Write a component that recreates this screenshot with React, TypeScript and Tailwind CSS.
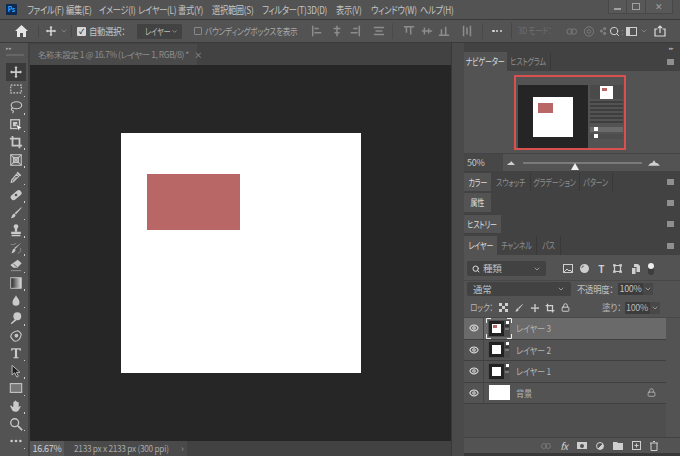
import { ChevronDown, Eye, Lock, Search } from "lucide-react";
import type { ReactNode } from "react";

const fontCls = "font-['Noto_Sans_CJK_JP',sans-serif] [font-feature-settings:'palt'] tracking-[-0.3px] whitespace-nowrap";

const menus = [
  ["ファイル(F)", "w-[39px]"],
  ["編集(E)", "w-[33px]"],
  ["イメージ(I)", "w-[39px]"],
  ["レイヤー(L)", "w-[40px]"],
  ["書式(Y)", "w-[34px]"],
  ["選択範囲(S)", "w-[50px]"],
  ["フィルター(T)", "w-[45px]"],
  ["3D(D)", "w-[29px]"],
  ["表示(V)", "w-[35px]"],
  ["ウィンドウ(W)", "w-[49px]"],
  ["ヘルプ(H)", "w-[34px]"],
];

// tool bar icons, drawn on a 16x16 box
const tools = [
  <path d="M8 1l2 2.500H9V7h3.500V6L15 8l-2.500 2V9H9v3.500h1L8 15l-2-2.500h1V9H3.500v1L1 8l2.500-2v1H7V3.500H6z" fill="currentColor" />,
  <rect x="2" y="3.500" width="12" height="9" fill="none" stroke="currentColor" strokeWidth="1.300" strokeDasharray="2 1.500" />,
  <g fill="none" stroke="currentColor" strokeWidth="1.300"><ellipse cx="8.500" cy="6" rx="6" ry="4" /><path d="M4 9c-2 1-1.500 3 0 3s1 2 0 3" /></g>,
  <g><rect x="2" y="2" width="10" height="10" fill="none" stroke="currentColor" strokeWidth="1.500" /><rect x="4.500" y="4.500" width="5" height="5" fill="currentColor" /><path d="M8 7l7 4-3 1-1 3z" fill="#fff" stroke="#333" strokeWidth=".5" /></g>,
  <path d="M4 1v11h11M1 4h11v11" fill="none" stroke="currentColor" strokeWidth="2" />,
  <g fill="none" stroke="currentColor" strokeWidth="1.200"><rect x="2" y="2" width="12" height="12" /><path d="M2 2l12 12M14 2L2 14" /><rect x="5" y="5" width="6" height="6" fill="currentColor" fillOpacity=".5" /></g>,
  <g fill="currentColor"><path d="M10 2l4 4-1.500 1.500-4-4z" /><path d="M8.500 5l2.500 2.500L5 13.500 2.500 14l.5-2.500z" fill="none" stroke="currentColor" strokeWidth="1.200" /><path d="M4 12l4-4 1 .5-4 4z" /></g>,
  <g><rect x="1" y="5" width="14" height="6.500" rx="3" transform="rotate(-40 8 8)" fill="currentColor" /><circle cx="8" cy="8" r="1.500" fill="#535353" /><path d="M4 4l2 1M11 11l1 1.500" stroke="#535353" /></g>,
  <g fill="currentColor"><path d="M14 1.500l.5.500L8 9.500 6.500 8z" /><path d="M6 8.500L7.500 10c0 2.500-2.500 4-5.500 4 1.500-1 1-4.500 4-5.500z" /></g>,
  <g fill="currentColor"><circle cx="8" cy="4" r="2.700" /><rect x="6.700" y="5" width="2.600" height="5" /><path d="M2.500 10h11v2.500h-11zM3 13.500h10V15H3z" /></g>,
  <g><path d="M14 2L7 9l-1-1zM6 8.500L7.500 10c0 2-2.500 4-5 4 1.500-1 1-4.500 3.500-5.500z" fill="currentColor" /><path d="M2 4c3 0 6 0 6-2M10 14c3-1 4-3 3-6" fill="none" stroke="currentColor" strokeWidth=".8" opacity=".6" /></g>,
  <g fill="currentColor"><path d="M10 2l4.500 4-5 5H5L1.500 8z" /><path d="M2 14h12v1H2z" opacity=".6" /><path d="M5 6.500l4 4" stroke="#535353" /></g>,
  <g><defs><linearGradient id="tg"><stop stopColor="#222" /><stop offset="1" stopColor="#ddd" /></linearGradient></defs><rect x="2" y="2" width="12" height="12" fill="url(#tg)" stroke="#ccc" /></g>,
  <path d="M8 1.500c1 2.500 4 5 4 8a4 4 0 01-8 0c0-3 3-5.500 4-8z" fill="currentColor" />,
  <g fill="currentColor"><circle cx="9.500" cy="6" r="4.500" /><path d="M7 9l1.500 1.500L3 15l-1-1z" /></g>,
  <g fill="none" stroke="currentColor" strokeWidth="1.300"><path d="M2 9c0-3 3-6 8-7 2 1 3 2 4 4-1 5-4 8-7 8-2 0-2-1-5-5z" /><circle cx="8.500" cy="7.500" r="1.500" fill="currentColor" /></g>,
  <path d="M2.500 2.500h11v3h-1l-.7-1.500H9.200v8.500l1.800.5v1H5v-1l1.800-.5V4H4.200l-.7 1.500h-1z" fill="currentColor" />,
  <path d="M3.500 1.500v11l3-2.500 2.500 5 1.800-1-2.300-4.500H12.500z" fill="#1f1f1f" stroke="currentColor" strokeWidth="1" />,
  <rect x="1.500" y="3" width="13" height="10" fill="#777" stroke="currentColor" strokeWidth="1.200" />,
  <path d="M5 8V3.500a.8.800 0 011.500 0V2.500a.8.800 0 011.600 0V3a.8.800 0 011.500 0v1a.8.800 0 011.500 0v5.500c.5-1 1.500-2 2.200-1.500.5.500-1 2.500-2 4.500-.7 1.500-2 2-4 2-2.500 0-3.500-1-4.300-3L1.500 8.500c-.3-1 1-1.500 1.500-.7L4.200 9.500z" fill="currentColor" />,
  <g fill="none" stroke="currentColor" strokeWidth="1.500"><circle cx="6.500" cy="6.500" r="4.500" /><path d="M10 10l5 5" strokeWidth="2" /></g>,
  <g fill="currentColor"><circle cx="3" cy="8" r="1.500" /><circle cx="8" cy="8" r="1.500" /><circle cx="13" cy="8" r="1.500" /></g>,
];

const PanelMenu = () => <span className="ml-auto mr-[6px] h-[6px] w-[7px] bg-[#8f8f8f]" />;

function Tab({ label, active, width }: { label: string; active?: boolean; width: string }) {
  return (
    <div className={`${width} flex h-full items-center justify-center text-[9.5px] ${active ? "bg-[#535353] text-[#dcdcdc]" : "border-r border-[#383838] text-[#8f8f8f]"}`}>
      <span className="inline-block scale-x-[0.74]">{label}</span>
    </div>
  );
}

function TabStrip({ h, children }: { h: string; children: ReactNode }) {
  return <div className={`flex ${h} items-center bg-[#424242]`}>{children}<PanelMenu /></div>;
}

function AlignIcon({ d, className }: { d: string; className?: string }) {
  return (
    <svg className={className} width="12" height="12" viewBox="0 0 14 14" fill="none" stroke="#a5a5a5" strokeWidth="1.800">
      <path d={d} />
    </svg>
  );
}

function Sep({ className }: { className: string }) {
  return <div className={`${className} h-[16px] border-l border-[#474747]`} />;
}

function MiniShot({ red }: { red?: boolean }) {
  return (
    <div className="flex h-[17px] w-[22px] gap-[1px] bg-[#4d4d4d] p-[1px]">
      <div className="flex h-full w-[15px] items-center justify-center bg-[#222]">
        <div className="h-[9px] w-[9px] bg-white pl-[1px] pt-[1px]">
          {red && <div className="h-[3px] w-[4px] bg-[#b96666]" />}
        </div>
      </div>
      <div className="flex flex-1 flex-col gap-[1px]">
        <div className="ml-[1px] h-[3px] w-[3px] bg-white" />
        <div className="h-[2px] bg-[#333]" />
        <div className="h-[2px] bg-[#777]" />
      </div>
    </div>
  );
}

function LayerRow({ name, thumb, active, locked }: { name: string; thumb: ReactNode; active?: boolean; locked?: boolean }) {
  return (
    <div className={`flex h-[21.5px] items-center border-b border-[#3f3f3f] ${active ? "bg-[#6a6a6a]" : "bg-[#535353]"}`}>
      <div className="flex h-full w-[20px] items-center justify-center border-r border-[#454545]">
        <Eye size={10} color="#e0e0e0" strokeWidth={2.5} />
      </div>
      <div className="ml-[3px] flex w-[24px] items-center justify-center">{thumb}</div>
      <span className="ml-[5px] inline-block origin-left scale-x-[0.86] text-[9.5px] text-[#b4b4b4]">{name}</span>
      {locked && <Lock size={9} color="#bdbdbd" className="ml-auto mr-[10px]" />}
    </div>
  );
}

function NavThumb() {
  return (
    <div className="flex h-[75px] w-[112px] flex-col border-2 border-[#d8504f] bg-[#535353] pl-[2px]">
      <div className="h-[8px] shrink-0" />
      <div className="flex flex-1">
        <div className="flex h-[63px] w-[70px] shrink-0 items-center justify-center bg-[#252525]">
          <div className="h-[40px] w-[40px] bg-white pl-[5px] pt-[6px]">
            <div className="h-[10px] w-[15px] bg-[#b96666]" />
          </div>
        </div>
        <div className="ml-[1px] flex flex-1 flex-col gap-[2px] pl-[1px] pr-[1px]">
          <div className="flex h-[14px] items-center justify-center bg-[#4a4a4a]">
            <div className="h-[13px] w-[13px] bg-white pl-[2px] pt-[2px]"><div className="h-[3px] w-[5px] bg-[#b96666]" /></div>
          </div>
          {[0, 1, 2, 3, 4, 5].map((i) => <div key={i} className="h-[2px] bg-[#3e3e3e]" />)}
          <div className="mt-[2px] h-[5px] bg-[#6a6a6a] pl-[4px]"><div className="h-[4px] w-[4px] bg-white" /></div>
          <div className="h-[5px] bg-[#4d4d4d] pl-[4px]"><div className="h-[4px] w-[4px] bg-white" /></div>
        </div>
      </div>
    </div>
  );
}

function Percent() {
  return (
    <div className="flex h-[12px] w-[35px] items-center">
      <div className="flex h-full w-[25px] items-center justify-center rounded-l-[1px] bg-[#3c3c3c] text-[9px]">100%</div>
      <div className="flex h-full flex-1 items-center justify-center bg-[#484848]"><ChevronDown size={8} /></div>
    </div>
  );
}

export default function App() {
  return (
    <div className={`${fontCls} flex h-[456px] w-[680px] flex-col overflow-hidden bg-[#424242] text-[#c4c4c4]`}>
      {/* menu bar */}
      <div className="flex h-[19px] shrink-0 items-center bg-[#535353] text-[10px]">
        <div className="ml-[6px] mr-[10px] flex h-[11px] w-[11px] items-center justify-center rounded-[1px] bg-[#0c2a52] text-[7px] font-bold text-[#31a8ff]">Ps</div>
        <div className="flex">
          {menus.map(([m, w]) => <span key={m} className={w}><span className="inline-block origin-left scale-x-[0.82]">{m}</span></span>)}
        </div>
        <div className="ml-auto mr-[7px] flex h-[14px] self-start text-[#a0a0a0]">
          <span className="flex w-[19px] items-center justify-center border-x border-b border-[#484848] bg-[#585858]"><span className="mt-[4px] h-[2px] w-[7px] bg-[#a0a0a0]" /></span>
          <span className="flex w-[19px] items-center justify-center border-b border-r border-[#484848] bg-[#585858]"><span className="h-[7px] w-[8px] border border-[#a0a0a0]" /></span>
          <span className="flex w-[27px] items-center justify-center border-b border-r border-[#484848] bg-[#585858] text-[9px] leading-none">✕</span>
        </div>
      </div>

      {/* options bar */}
      <div className="flex h-[24px] shrink-0 items-center border-y border-[#3a3a3a] bg-[#535353] text-[9.5px]">
        <div className="flex w-[39px] items-center border-r border-[#474747] pl-[15px]">
          <svg width="13" height="12" viewBox="0 0 13 12" fill="#e6e6e6"><path d="M6.500 0L13 6h-2v6H8V8H5v4H2V6H0z" /></svg>
        </div>
        <div className="flex w-[33px] items-center border-r border-[#474747] pl-[6px]">
          <svg className="text-[#d8d8d8]" width="12" height="12" viewBox="0 0 16 16">{tools[0]}</svg>
          <ChevronDown size={8} className="ml-[3px] text-[#999]" />
        </div>
        <div className="ml-[5px] flex h-[9px] w-[9px] items-center justify-center rounded-[1px] bg-[#d8d8d8] text-[7px] font-bold leading-none text-[#333]">✓</div>
        <span className="ml-[3px] w-[45px]"><span className="inline-block origin-left scale-x-[0.88]">自動選択：</span></span>
        <div className="ml-[3px] flex h-[15px] w-[45px] items-center rounded-[1px] bg-[#424242] pl-[8px] text-[9.5px] text-[#bdbdbd]">
          <span className="inline-block w-[26px] origin-left scale-x-[0.76]">レイヤー</span><ChevronDown size={7} />
        </div>
        <div className="ml-[12px] h-[8px] w-[8px] rounded-[1px] border border-[#888]" />
        <span className="ml-[3px] w-[100px] text-[#a8a8a8]"><span className="inline-block origin-left scale-x-[0.8]">バウンディングボックスを表示</span></span>
        <div className="flex items-center opacity-70">
          <AlignIcon className="ml-[6px]" d="M2 1v12M4 4h5M4 9h8" />
          <AlignIcon className="ml-[8px]" d="M7 1v12M3 4h8M4 9h6" />
          <AlignIcon className="ml-[6px]" d="M12 1v12M5 4h5M2 9h8" />
          <AlignIcon className="ml-[12px]" d="M1 3h12M1 11h12M3 7h8" />
          <Sep className="ml-[7px]" />
          <AlignIcon className="ml-[10px]" d="M1 2h12M4 3v6M9 3v8" />
          <AlignIcon className="ml-[6px]" d="M1 7h12M4 3v8M9 4v6" />
          <AlignIcon className="ml-[5px]" d="M1 12h12M4 5v6M9 2v9" />
          <AlignIcon className="ml-[11px]" d="M3 1v12M11 1v12M7 3v8" />
          <Sep className="ml-[9px]" />
        </div>
        <div className="ml-[9px] flex w-[10px] justify-between">
          {[0, 1, 2].map((i) => <span key={i} className="h-[2.5px] w-[2.5px] rounded-full bg-[#d8d8d8]" />)}
        </div>
        <Sep className="ml-[9px]" />
        <span className="ml-[6px] w-[47px] text-[9px] text-[#6f6f6f]"><span className="inline-block origin-left scale-x-[0.84]">3D モード：</span></span>
        <div className="flex items-center text-[#7d7d7d]">
          <svg width="13" height="11" viewBox="0 0 14 12" fill="none" stroke="currentColor"><circle cx="5" cy="6" r="3" /><circle cx="9.500" cy="6" r="3" /></svg>
          <svg className="ml-[5px]" width="12" height="12" viewBox="0 0 13 13" fill="none" stroke="currentColor"><circle cx="6.500" cy="7" r="5" /><circle cx="6.500" cy="7" r="2" /></svg>
          <svg className="ml-[4px]" width="8" height="12" viewBox="0 0 10 12" fill="currentColor"><circle cx="3" cy="6" r="2" /><circle cx="7" cy="3" r="2" /><circle cx="7" cy="9" r="2" /></svg>
          <Search className="ml-[2px]" size={11} color="#dcdcdc" strokeWidth={2} />
          <span className="ml-[1px] text-[#888]">:</span>
          <div className="ml-[3px] flex h-[9px] w-[11px] border border-[#d0d0d0]"><span className="w-[3px] bg-[#d0d0d0]" /></div>
          <ChevronDown size={8} className="ml-[3px] text-[#999]" />
          <svg className="ml-[6px]" width="12" height="12" viewBox="0 0 12 12" fill="none" stroke="#dcdcdc" strokeWidth="1.200"><path d="M3.500 4H1v7h10V4H8.500M6 8V1M4 3l2-2 2 2" /></svg>
        </div>
      </div>

      {/* work area */}
      <div className="flex min-h-0 flex-1">
        {/* tools */}
        <div className="flex w-[30px] shrink-0 flex-col border-r-2 border-[#424242] bg-[#535353] pl-[6px]">
          <div className="h-[9px] text-[5px] leading-[9px] text-[#aaa]">▸▸</div>
          <div className="mt-[2px] h-[2px] w-[18px] border-y border-[#666]" />
          <div className="h-[7px]" />
          {tools.map((icon, i) => (
            <div key={i} className={`relative flex h-[17.6px] w-[20px] items-center justify-center ${i === 0 ? "bg-[#3b3b3b]" : ""} text-[#cacaca]`}>
              <svg width="14" height="14" viewBox="0 0 16 16">{icon}</svg>
              {i > 0 && i !== 15 && <span className="absolute bottom-[1px] right-[1px] h-[1.5px] w-[1.5px] bg-[#cfcfcf]" />}
            </div>
          ))}
        </div>

        {/* document */}
        <div className="flex min-w-0 flex-1 flex-col">
          <div className="flex h-[22px] shrink-0 items-end bg-[#424242]">
            <div className="flex h-[21px] w-[167px] items-center bg-[#4a4a4a] pl-[8px] text-[8.5px] tracking-[-0.45px] text-[#8e8e8e]">
              名称未設定 1 @ 16.7% (レイヤー 1, RGB/8) *
              <span className="ml-[5px]">×</span>
            </div>
          </div>
          <div className="flex min-h-0 flex-1 items-center justify-center bg-[#262626]">
            <div className="h-[240px] w-[240px] bg-white pl-[26px] pt-[41px]">
              <div className="h-[56px] w-[93px] bg-[#b96666]" />
            </div>
          </div>
          <div className="flex h-[15px] shrink-0 items-center bg-[#424242] text-[9px] text-[#bbb]">
            <span className="flex h-full w-[34px] items-center justify-center bg-[#585858] text-[#d0d0d0]">16.67%</span>
            <div className="flex h-full w-[123px] items-center bg-[#4a4a4a] pl-[10px] text-[#a8a8a8]">
              <span className="inline-block w-[107px] origin-left scale-x-[0.92]">2133 px x 2133 px (300 ppi)</span>
              <span className="text-[#999]">›</span>
            </div>
          </div>
        </div>

        {/* strip left of the panels */}
        <div className="w-[13px] shrink-0 border-l border-[#383838] bg-[#4a4a4a]" />

        {/* panels */}
        <div className="flex w-[216px] shrink-0 flex-col text-[9px]">
          <div className="flex h-[9px] items-center justify-end bg-[#424242] pr-[6px] text-[5px] text-[#aaa]">▸▸</div>
          <TabStrip h="h-[19px]">
            <Tab label="ナビゲーター" active width="w-[43px]" />
            <Tab label="ヒストグラム" width="w-[44px]" />
          </TabStrip>
          <div className="flex h-[82px] bg-[#535353] pl-[50px] pt-[4px]">
            <NavThumb />
          </div>
          <div className="flex h-[18px] items-center border-t border-[#444] bg-[#535353]">
            <div className="flex h-full w-[39px] items-center bg-[#474747] pl-[3px] text-[#c8c8c8]">50%</div>
            <svg className="ml-[4px]" width="8" height="4" viewBox="0 0 8 4" fill="#d0d0d0"><path d="M0 4l2-2 1 0 1-2 2 2 2 2z" /></svg>
            <div className="ml-[8px] h-[2px] w-[119px] bg-[#7a7a7a]">
              <svg className="ml-[48px] mt-[1px]" width="8" height="7" viewBox="0 0 8 7" fill="#eee"><path d="M4 0l4 7H0z" /></svg>
            </div>
            <svg className="ml-[6px]" width="12" height="6" viewBox="0 0 13 6" fill="#d0d0d0"><path d="M0 6l3-3 1.500 0 2-3 2 3 1.500 0 3 3z" /></svg>
          </div>

          <div className="mt-[2px]">
            <TabStrip h="h-[18px]">
              <Tab label="カラー" active width="w-[27px]" />
              <Tab label="スウォッチ" width="w-[40px]" />
              <Tab label="グラデーション" width="w-[49px]" />
              <Tab label="パターン" width="w-[33px]" />
            </TabStrip>
          </div>
          <div className="mt-[2px]">
            <TabStrip h="h-[19px]"><Tab label="属性" active width="w-[27px]" /></TabStrip>
          </div>
          <div className="mt-[3px]">
            <TabStrip h="h-[18px]"><Tab label="ヒストリー" active width="w-[37px]" /></TabStrip>
          </div>
          <div className="mt-[3px]">
            <TabStrip h="h-[19px]">
              <Tab label="レイヤー" active width="w-[33px]" />
              <Tab label="チャンネル" width="w-[40px]" />
              <Tab label="パス" width="w-[24px]" />
            </TabStrip>
          </div>

          {/* layers panel */}
          <div className="flex min-h-0 flex-1 flex-col bg-[#535353] text-[#c0c0c0]">
            <div className="flex h-[25px] shrink-0 items-center pl-[3px] pt-[2px]">
              <div className="flex h-[15px] w-[79px] items-center rounded-[2px] bg-[#424242] px-[5px]">
                <Search size={8} color="#ddd" strokeWidth={3} />
                <span className="ml-[3px] text-[9.5px]">種類</span>
                <ChevronDown size={8} className="ml-auto" />
              </div>
              <div className="ml-[14px] flex items-center text-[#cfcfcf]">
                <span className="flex w-[16.5px] justify-center"><svg width="10" height="9" viewBox="0 0 10 9" fill="none" stroke="currentColor"><rect x=".5" y=".5" width="9" height="8" /><path d="M1 8l3-3 2 2 1-1 2 2" /></svg></span>
                <span className="flex w-[16.5px] justify-center"><svg width="9" height="9" viewBox="0 0 9 9" fill="currentColor"><path d="M4.500 0a4.500 4.500 0 100 9 4.500 4.500 0 000-9zM1.500 4.500a3 3 0 013-3z" /></svg></span>
                <span className="flex w-[16.5px] justify-center text-[10px] font-bold leading-none">T</span>
                <span className="flex w-[16.5px] justify-center"><svg width="9" height="9" viewBox="0 0 9 9" fill="none" stroke="currentColor" strokeWidth="1.200"><path d="M1.500 1.500h6v6h-6zM0 0h2v2H0zM7 0h2v2H7zM0 7h2v2H0zM7 7h2v2H7z" /></svg></span>
                <span className="flex w-[20px] justify-center"><svg width="8" height="10" viewBox="0 0 8 10" fill="currentColor"><path d="M0 4h3.500v6H0zM2 0h4l2 2v6H4.500V3H2z" /></svg></span>
                <span className="ml-[2px] h-[12px] w-[6px] rounded-full bg-[#3d3d3d]"><span className="block h-[6px] w-[6px] rounded-full bg-[#eee]" /></span>
              </div>
            </div>
            <div className="flex h-[17px] shrink-0 items-center border-t border-[#484848] pl-[3px]">
              <div className="flex h-[14px] w-[104px] items-center rounded-[2px] bg-[#424242] px-[6px] text-[9.5px]">
                通常<ChevronDown size={8} className="ml-auto" />
              </div>
              <span className="ml-[6px] w-[41px]"><span className="inline-block origin-left scale-x-[0.88] text-[9.5px]">不透明度：</span></span>
              <Percent />
            </div>
            <div className="flex h-[20px] shrink-0 items-center pl-[6px] pt-[1px] text-[#b8b8b8]">
              <span className="w-[26px]"><span className="inline-block origin-left scale-x-[0.8] text-[9.5px]">ロック：</span></span>
              <div className="flex items-center text-[#d0d0d0]">
                <span className="flex w-[15.5px] justify-center"><svg width="9" height="9" viewBox="0 0 9 9" fill="currentColor"><path d="M0 0h3v3H0zM6 0h3v3H6zM3 3h3v3H3zM0 6h3v3H0zM6 6h3v3H6z" /></svg></span>
                <span className="flex w-[15.5px] justify-center"><svg width="10" height="10" viewBox="0 0 16 16">{tools[8]}</svg></span>
                <span className="flex w-[15.5px] justify-center"><svg width="10" height="10" viewBox="0 0 16 16">{tools[0]}</svg></span>
                <span className="flex w-[15.5px] justify-center"><svg width="10" height="10" viewBox="0 0 16 16">{tools[4]}</svg></span>
                <span className="flex w-[15.5px] justify-center"><Lock size={9} strokeWidth={2.5} /></span>
              </div>
              <span className="ml-[28px] w-[23px]"><span className="inline-block origin-left scale-x-[0.9] text-[9.5px]">塗り：</span></span>
              <Percent />
            </div>

            <div className="flex min-h-0 flex-1 border-t border-[#484848]">
              <div className="w-[202px] bg-[#4e4e4e]">
                <LayerRow
                  active
                  name="レイヤー 3"
                  thumb={
                    <div className="relative">
                      <MiniShot red />
                      <svg className="absolute -left-[2px] -top-[2px]" width="26" height="21" viewBox="0 0 26 21" fill="none" stroke="#eee" strokeWidth="1">
                        <path d="M.5 5V.5H5M21 .5h4.500V5M.5 16v4.500H5M21 20.500h4.500V16" />
                      </svg>
                    </div>
                  }
                />
                <LayerRow name="レイヤー 2" thumb={<MiniShot />} />
                <LayerRow name="レイヤー 1" thumb={<MiniShot />} />
                <LayerRow locked name="背景" thumb={<div className="h-[15px] w-[21px] bg-white" />} />
              </div>
              <div className="flex-1 bg-[#535353]" />
            </div>

            <div className="flex h-[16px] shrink-0 items-center justify-end border-t border-[#424242] pr-[17px] text-[#cfcfcf]">
              <span className="flex w-[18px] justify-center"><svg width="10" height="6" viewBox="0 0 10 6" fill="none" stroke="#777"><rect x=".5" y=".5" width="5" height="5" rx="2.500" /><rect x="4.500" y=".5" width="5" height="5" rx="2.500" /></svg></span>
              <span className="flex w-[18px] justify-center text-[10px] italic leading-none">fx</span>
              <span className="flex w-[18px] justify-center"><span className="flex h-[7px] w-[10px] items-center justify-center bg-current"><span className="h-[4px] w-[4px] rounded-full bg-[#535353]" /></span></span>
              <span className="flex w-[18px] justify-center"><span className="h-[8px] w-[8px] rounded-full border border-current bg-[linear-gradient(135deg,transparent_50%,#cfcfcf_50%)]" /></span>
              <span className="flex w-[18px] justify-center"><svg width="10" height="8" viewBox="0 0 10 8" fill="currentColor"><path d="M0 0h4l1 1h5v7H0z" /></svg></span>
              <span className="flex w-[18px] justify-center"><svg width="9" height="9" viewBox="0 0 9 9" fill="none" stroke="currentColor"><rect x=".5" y=".5" width="8" height="8" /><path d="M4.500 2.500v4M2.500 4.500h4" /></svg></span>
              <span className="flex w-[18px] justify-center"><svg width="8" height="10" viewBox="0 0 8 10" fill="none" stroke="currentColor"><path d="M0 2h8M3 .5h2M1 2v7.500h6V2" /></svg></span>
            </div>
          </div>
          <div className="h-[3px] shrink-0 bg-[#383838]" />
        </div>
      </div>
    </div>
  );
}
